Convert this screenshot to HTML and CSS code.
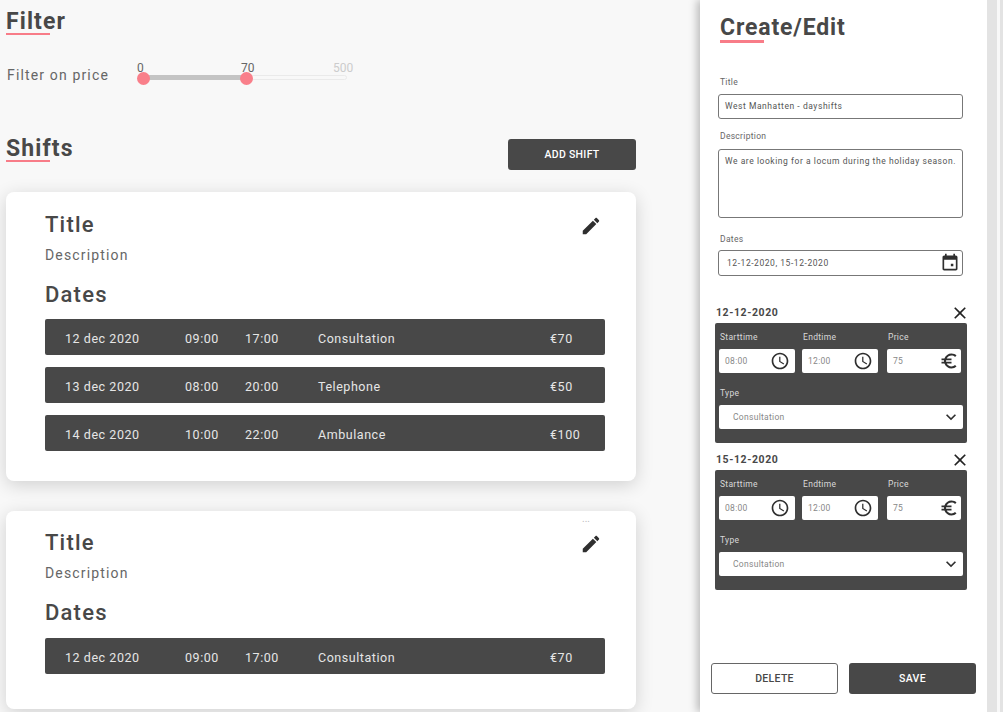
FILE: index.html
```html
<!DOCTYPE html>
<html lang="en">
<head>
    <meta charset="UTF-8">
    <meta name="viewport" content="width=device-width, initial-scale=1.0">
    <title>Shifts</title>
    <link rel="stylesheet" href="styles.css">
</head>
<body>
    <svg class="icon-defs" width="0" height="0">
        <symbol id="i-edit" viewBox="0 0 24 24"><path d="M3 17.25V21h3.75L17.81 9.94l-3.75-3.75L3 17.25zM20.71 7.04c.39-.39.39-1.02 0-1.41l-2.34-2.34c-.39-.39-1.02-.39-1.41 0l-1.83 1.83 3.75 3.75 1.83-1.83z"/></symbol>
        <symbol id="i-calendar" viewBox="0 0 24 24"><path d="M16 13h-3v3h3v-3zM16 1v2H8V1H6v2H5c-1.11 0-1.99.9-1.99 2L3 19c0 1.1.89 2 2 2h14c1.1 0 2-.9 2-2V5c0-1.1-.9-2-2-2h-1V1h-2zm3 18H5V8h14v11z"/></symbol>
        <symbol id="i-clock" viewBox="0 0 24 24"><path d="M11.99 2C6.47 2 2 6.48 2 12s4.47 10 9.99 10C17.52 22 22 17.52 22 12S17.52 2 11.99 2zM12 20c-4.42 0-8-3.58-8-8s3.58-8 8-8 8 3.58 8 8-3.58 8-8 8zm.5-13H11v6l5.25 3.15.75-1.23-4.5-2.67z"/></symbol>
        <symbol id="i-euro" viewBox="0 0 24 24"><path d="M15 18.5c-2.51 0-4.68-1.42-5.76-3.5H15v-2H8.58c-.05-.33-.08-.66-.08-1s.03-.67.08-1H15V9H9.24C10.32 6.92 12.5 5.5 15 5.5c1.61 0 3.09.59 4.23 1.57L21 5.3C19.41 3.87 17.3 3 15 3c-3.92 0-7.24 2.51-8.48 6H3v2h3.06c-.04.33-.06.66-.06 1s.02.67.06 1H3v2h3.52c1.24 3.49 4.56 6 8.48 6 2.31 0 4.41-.87 6-2.3l-1.78-1.77c-1.13.98-2.6 1.57-4.22 1.57z"/></symbol>
        <symbol id="i-close" viewBox="0 0 24 24"><path d="M19 6.41L17.59 5 12 10.59 6.41 5 5 6.41 10.59 12 5 17.59 6.41 19 12 13.41 17.59 19 19 17.59 13.41 12z"/></symbol>
        <symbol id="i-down" viewBox="0 0 24 24"><path d="M16.59 8.59L12 13.17 7.41 8.59 6 10l6 6 6-6z"/></symbol>
    </svg>

    <main class="content">
        <h1 class="heading">Filter</h1>

        <div class="filter-row">
            <span class="filter-label">Filter on price</span>
            <div class="slider">
                <div class="slider-fill"></div>
                <span class="slider-thumb thumb-min"></span>
                <span class="slider-thumb thumb-val"></span>
                <span class="slider-num num-min">0</span>
                <span class="slider-num num-val">70</span>
                <span class="slider-num num-max">500</span>
            </div>
        </div>

        <div class="shifts-head">
            <h1 class="heading">Shifts</h1>
            <button class="btn-dark add-shift">ADD SHIFT</button>
        </div>

        <section class="card">
            <div class="card-top">
                <h2 class="card-title">Title</h2>
                <svg class="icon edit-icon"><use href="#i-edit"/></svg>
            </div>
            <p class="card-desc">Description</p>
            <h2 class="card-title dates-title">Dates</h2>
            <div class="date-row"><span>12 dec 2020</span><span>09:00</span><span>17:00</span><span>Consultation</span><span>€70</span></div>
            <div class="date-row"><span>13 dec 2020</span><span>08:00</span><span>20:00</span><span>Telephone</span><span>€50</span></div>
            <div class="date-row"><span>14 dec 2020</span><span>10:00</span><span>22:00</span><span>Ambulance</span><span>€100</span></div>
        </section>

        <section class="card card-short">
            <span class="card-dots">...</span>
            <div class="card-top">
                <h2 class="card-title">Title</h2>
                <svg class="icon edit-icon"><use href="#i-edit"/></svg>
            </div>
            <p class="card-desc">Description</p>
            <h2 class="card-title dates-title">Dates</h2>
            <div class="date-row"><span>12 dec 2020</span><span>09:00</span><span>17:00</span><span>Consultation</span><span>€70</span></div>
        </section>
    </main>

    <aside class="panel">
        <h1 class="heading panel-heading">Create/Edit</h1>

        <label class="field-label first-label">Title</label>
        <div class="field title-field">West Manhatten - dayshifts</div>

        <label class="field-label">Description</label>
        <div class="field area-field">We are looking for a locum during the holiday season.</div>

        <label class="field-label dates-label">Dates</label>
        <div class="field date-field">
            <span>12-12-2020, 15-12-2020</span>
            <svg class="icon cal-icon"><use href="#i-calendar"/></svg>
        </div>

        <div class="day first-day">
            <div class="day-head">
                <span>12-12-2020</span>
                <svg class="icon close-icon"><use href="#i-close"/></svg>
            </div>
            <div class="day-box">
                <div class="day-cols">
                    <div>
                        <span class="day-label">Starttime</span>
                        <div class="mini-input"><span>08:00</span><svg class="icon mini-icon"><use href="#i-clock"/></svg></div>
                    </div>
                    <div>
                        <span class="day-label">Endtime</span>
                        <div class="mini-input"><span>12:00</span><svg class="icon mini-icon"><use href="#i-clock"/></svg></div>
                    </div>
                    <div>
                        <span class="day-label">Price</span>
                        <div class="mini-input"><span>75</span><svg class="icon mini-icon euro-icon"><use href="#i-euro"/></svg></div>
                    </div>
                </div>
                <span class="day-label type-label">Type</span>
                <div class="mini-input type-select"><span>Consultation</span><svg class="icon mini-icon"><use href="#i-down"/></svg></div>
            </div>
        </div>

        <div class="day">
            <div class="day-head">
                <span>15-12-2020</span>
                <svg class="icon close-icon"><use href="#i-close"/></svg>
            </div>
            <div class="day-box">
                <div class="day-cols">
                    <div>
                        <span class="day-label">Starttime</span>
                        <div class="mini-input"><span>08:00</span><svg class="icon mini-icon"><use href="#i-clock"/></svg></div>
                    </div>
                    <div>
                        <span class="day-label">Endtime</span>
                        <div class="mini-input"><span>12:00</span><svg class="icon mini-icon"><use href="#i-clock"/></svg></div>
                    </div>
                    <div>
                        <span class="day-label">Price</span>
                        <div class="mini-input"><span>75</span><svg class="icon mini-icon euro-icon"><use href="#i-euro"/></svg></div>
                    </div>
                </div>
                <span class="day-label type-label">Type</span>
                <div class="mini-input type-select"><span>Consultation</span><svg class="icon mini-icon"><use href="#i-down"/></svg></div>
            </div>
        </div>

        <div class="panel-buttons">
            <button class="btn-outline">DELETE</button>
            <button class="btn-dark">SAVE</button>
        </div>
    </aside>

    <div class="scrollbar"></div>
    <div class="scrollbar scrollbar-far"></div>
</body>
</html>
```

FILE: styles.css
```css
* {
    box-sizing: border-box;
}

html, body {
    height: 712px;
    overflow: hidden;
}

body {
    display: flex;
    margin: 0;
    background-color: #f8f8f8;
    color: #484848;
    font-family: 'Roboto', sans-serif;
}

.icon-defs {
    position: absolute;
}

.icon {
    display: block;
    fill: #2f2f2f;
    flex: none;
}

.content {
    width: 630px;
    margin-left: 6px;
    flex: none;
}

/* headings with the short pink underline */
.heading {
    position: relative;
    margin: 0;
    font-size: 23px;
    line-height: 26px;
    font-weight: 700;
    letter-spacing: 1.1px;
}

.heading::after {
    content: "";
    position: absolute;
    left: 0;
    bottom: 0;
    width: 44px;
    height: 2px;
    background-color: #f87c88;
}

.content > .heading {
    margin-top: 9px;
}

.filter-row {
    display: flex;
    align-items: center;
    margin-top: 27px;
}

.filter-label {
    width: 137px;
    padding-left: 1px;
    font-size: 14px;
    line-height: 26px;
    letter-spacing: 1.15px;
    color: #666;
}

.slider {
    position: relative;
    width: 204px;
    height: 5px;
    margin-top: 5px;
    border: 1px solid #eaeaea;
    border-radius: 3px;
}

.slider-fill {
    width: 103px;
    height: 5px;
    margin-top: -1px;
    background-color: #c4c4c4;
}

.slider-thumb {
    position: absolute;
    top: -4px;
    width: 13px;
    height: 13px;
    border-radius: 50%;
    background-color: #f97f8a;
}

.thumb-min {
    left: -7px;
}

.thumb-val {
    left: 96px;
}

.slider-num {
    position: absolute;
    top: -15px;
    font-size: 12px;
    line-height: 14px;
    color: #666;
}

.num-min {
    left: -7px;
}

.num-val {
    left: 97px;
}

.num-max {
    left: 189px;
    color: #ccc;
}

.shifts-head {
    display: flex;
    justify-content: space-between;
    align-items: flex-start;
    margin-top: 48px;
}

.btn-dark, .btn-outline {
    height: 31px;
    border-radius: 3px;
    font-family: 'Roboto', sans-serif;
    font-size: 10.5px;
    font-weight: 500;
    letter-spacing: 0.3px;
}

.btn-dark {
    border: none;
    background-color: #484848;
    color: white;
}

.btn-outline {
    border: 1px solid #666;
    background-color: white;
    color: #484848;
}

.add-shift {
    width: 128px;
    margin-top: 3px;
}

.card {
    position: relative;
    height: 289px;
    margin-top: 22px;
    padding: 19px 31px 0 39px;
    border-radius: 8px;
    background-color: white;
    box-shadow: 0 4px 18px rgba(0, 0, 0, 0.16);
}

.card + .card {
    margin-top: 30px;
}

.card-short {
    height: 198px;
    padding-top: 18px;
}

.card-top {
    display: flex;
    justify-content: space-between;
    align-items: center;
}

.card-title {
    margin: 0;
    font-size: 22px;
    line-height: 28px;
    font-weight: 500;
    letter-spacing: 1.2px;
}

.edit-icon {
    width: 22px;
    height: 22px;
    margin-top: 2px;
    margin-right: 3px;
}

.card-desc {
    margin: 7px 0 0;
    font-size: 14px;
    line-height: 18px;
    letter-spacing: 1.15px;
    color: #666;
}

.dates-title {
    margin-top: 17px;
    margin-bottom: 10px;
}

.card-short .dates-title {
    margin-bottom: 11px;
}

.date-row {
    display: grid;
    grid-template-columns: 120px 60px 73px 232px 1fr;
    align-items: center;
    height: 36px;
    margin-bottom: 12px;
    padding-top: 2px;
    padding-left: 20px;
    border-radius: 2px;
    background-color: #484848;
    color: #e6e6e6;
    font-size: 12.5px;
    letter-spacing: 0.55px;
}

.card-dots {
    position: absolute;
    top: 2px;
    right: 46px;
    font-size: 10px;
    line-height: 12px;
    color: #bbb;
}

/* right hand panel */
.panel {
    display: flex;
    flex-direction: column;
    width: 287px;
    height: 712px;
    margin-left: 64px;
    padding: 15px 11px 18px 15px;
    flex: none;
    background-color: white;
    box-shadow: -3px 0 8px rgba(0, 0, 0, 0.25);
}

.panel-heading {
    margin-left: 5px;
    letter-spacing: 0.85px;
}

.panel-heading::after {
    bottom: -2px;
    height: 3px;
}

.field-label {
    display: block;
    margin: 12px 0 8px 5px;
    font-size: 8.5px;
    line-height: 10px;
    letter-spacing: 0.3px;
    color: #666;
}

.first-label {
    margin-top: 36px;
    margin-bottom: 7px;
}

.dates-label {
    margin-top: 16px;
    margin-bottom: 6px;
}

.field {
    width: 245px;
    margin-left: 3px;
    padding: 0 6px;
    border: 1px solid #777;
    border-radius: 3px;
    font-size: 8.5px;
    letter-spacing: 0.55px;
    color: #555;
}

.title-field {
    height: 25px;
    line-height: 23px;
}

.area-field {
    height: 69px;
    padding-top: 5px;
    line-height: 12px;
}

.date-field {
    display: flex;
    justify-content: space-between;
    align-items: center;
    height: 26px;
    padding-left: 8px;
    padding-right: 2px;
}

.cal-icon {
    width: 20px;
    height: 20px;
}

.day {
    width: 252px;
    margin-top: 6px;
}

.first-day {
    margin-top: 26px;
}

.day-head {
    display: flex;
    justify-content: space-between;
    align-items: center;
    height: 21px;
    padding-left: 1px;
    margin-right: -3px;
    font-size: 10.5px;
    font-weight: 700;
    letter-spacing: 0.6px;
    color: #484848;
}

.close-icon {
    width: 20px;
    height: 20px;
    fill: #222;
}

.day-box {
    height: 120px;
    padding: 8px 4px 0;
    border-radius: 2px;
    background-color: #484848;
}

.day-cols {
    display: grid;
    grid-template-columns: 76px 76px 76px;
    column-gap: 7px;
    margin-right: -4px;
}

.day-cols > div:last-child {
    margin-left: 2px;
}

.day-label {
    display: block;
    height: 18px;
    padding-left: 1px;
    font-size: 8.5px;
    line-height: 12px;
    letter-spacing: 0.3px;
    color: #d8d8d8;
}

.type-label {
    margin-top: 14px;
}

.mini-input {
    display: flex;
    justify-content: space-between;
    align-items: center;
    height: 24px;
    padding: 0 5px 0 6px;
    border-radius: 2px;
    background-color: white;
    font-size: 8.5px;
    letter-spacing: 0.3px;
    color: #888;
}

.mini-icon {
    width: 20px;
    height: 20px;
}

.euro-icon {
    margin-right: -3px;
}

.type-select {
    padding-left: 14px;
    padding-right: 2px;
}

.panel-buttons {
    display: flex;
    gap: 11px;
    margin-top: auto;
    margin-left: -4px;
}

.panel-buttons button {
    width: 127px;
}

.scrollbar {
    width: 10px;
    height: 712px;
    flex: none;
    background-color: #e3e3e3;
}

.scrollbar-far {
    width: 3px;
    margin-left: 3px;
}
```
